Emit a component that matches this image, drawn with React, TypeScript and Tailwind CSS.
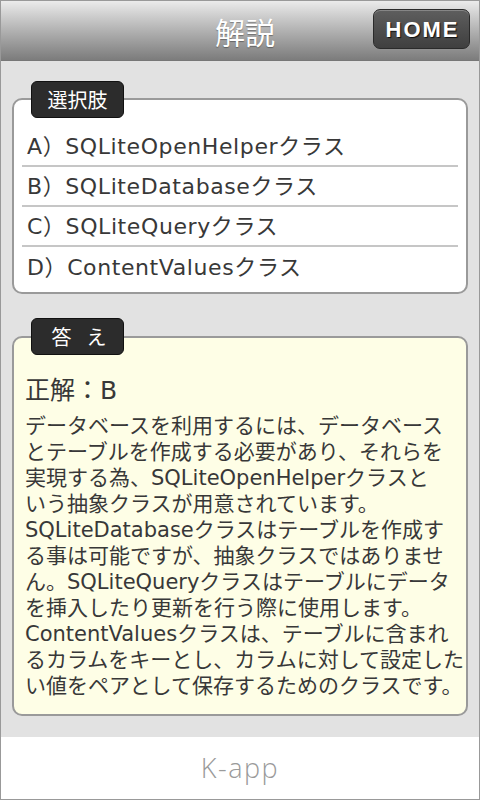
const jp = { fontFamily: '"DejaVu Sans", "Noto Sans CJK JP", sans-serif' }

const options = [
  'A）SQLiteOpenHelperクラス',
  'B）SQLiteDatabaseクラス',
  'C）SQLiteQueryクラス',
  'D）ContentValuesクラス',
]

const lines = [
  'データベースを利用するには、データベース',
  'とテーブルを作成する必要があり、それらを',
  '実現する為、SQLiteOpenHelperクラスと',
  'いう抽象クラスが用意されています。',
  'SQLiteDatabaseクラスはテーブルを作成す',
  'る事は可能ですが、抽象クラスではありませ',
  'ん。SQLiteQueryクラスはテーブルにデータ',
  'を挿入したり更新を行う際に使用します。',
  'ContentValuesクラスは、テーブルに含まれ',
  'るカラムをキーとし、カラムに対して設定した',
  'い値をペアとして保存するためのクラスです。',
]

function Tab({ label, wide }: { label: string; wide?: boolean }) {
  return (
    <div
      className={`absolute top-0 left-[19px] w-[93px] h-[37px] rounded-[6px] bg-[#2c2c2c] border border-[#111] flex items-center justify-center text-white text-[20px] leading-none ${wide ? 'tracking-[15px] pl-[18px]' : ''}`}
      style={{ fontFamily: '"Noto Sans CJK JP", sans-serif' }}
    >
      {label}
    </div>
  )
}

export default function App() {
  return (
    <div className="w-[480px] h-[800px] border border-[#999] flex flex-col bg-[#e2e2e2] overflow-hidden" style={jp}>
      {/* ヘッダー */}
      <header className="h-[60px] shrink-0 relative flex items-center justify-center bg-gradient-to-b from-[#ebebeb] to-[#7c7c7c] border-b border-[#777]">
        <h1 className="text-white text-[30px] leading-none pl-[10px] [text-shadow:0_1px_1px_rgba(0,0,0,0.35)]" style={{ fontFamily: '"Noto Sans CJK JP", sans-serif' }}>
          解説
        </h1>
        <button className="absolute right-[9px] top-[8px] w-[97px] h-[40px] rounded-[7px] bg-gradient-to-b from-[#5e5e5e] to-[#3f3f3f] border border-[#2a2a2a] shadow-[inset_0_1px_0_rgba(255,255,255,0.25)] flex items-center justify-center text-white text-[22px] font-black tracking-[2px] pl-[2px] [text-shadow:1px_1px_1px_rgba(0,0,0,0.8)]"
          style={{ fontFamily: '"Liberation Sans", Arial, sans-serif' }}>
          HOME
        </button>
      </header>

      <main className="flex-1 px-[11px] pt-[20px] flex flex-col gap-[24px]">
        {/* 選択肢 */}
        <section className="relative pt-[17px]">
          <div className="rounded-[10px] border-2 border-[#9a9a9a] bg-white pt-[27px] pb-[5px] px-[8px]">
            {options.map((o, i) => (
              <div key={o}
                className={`h-[40px] flex items-center pl-[5px] text-[22px] tracking-[0.6px] text-[#383838] whitespace-nowrap ${i < options.length - 1 ? 'border-b-2 border-[#c6c6c6]' : ''}`}>
                {o}
              </div>
            ))}
          </div>
          <Tab label="選択肢" />
        </section>

        {/* 答え */}
        <section className="relative pt-[18px]">
          <div className="rounded-[10px] border-2 border-[#9a9a9a] bg-[#fefee6] pt-[36px] pb-[15px] px-[11px] text-[#383838]">
            <p className="text-[25px] leading-[34px] mb-[5px]">正解：B</p>
            <div className="text-[21px] leading-[26px]">
              {lines.map(l => (
                <div key={l} className="whitespace-nowrap">{l}</div>
              ))}
            </div>
          </div>
          <Tab label="答え" wide />
        </section>
      </main>

      <footer className="h-[62px] shrink-0 bg-white flex items-center justify-center">
        <span className="text-[27px] text-[#9a9a9a] font-light tracking-[1.5px]" style={{ fontFamily: '"Open Sans", Lato, sans-serif' }}>K-app</span>
      </footer>
    </div>
  )
}
